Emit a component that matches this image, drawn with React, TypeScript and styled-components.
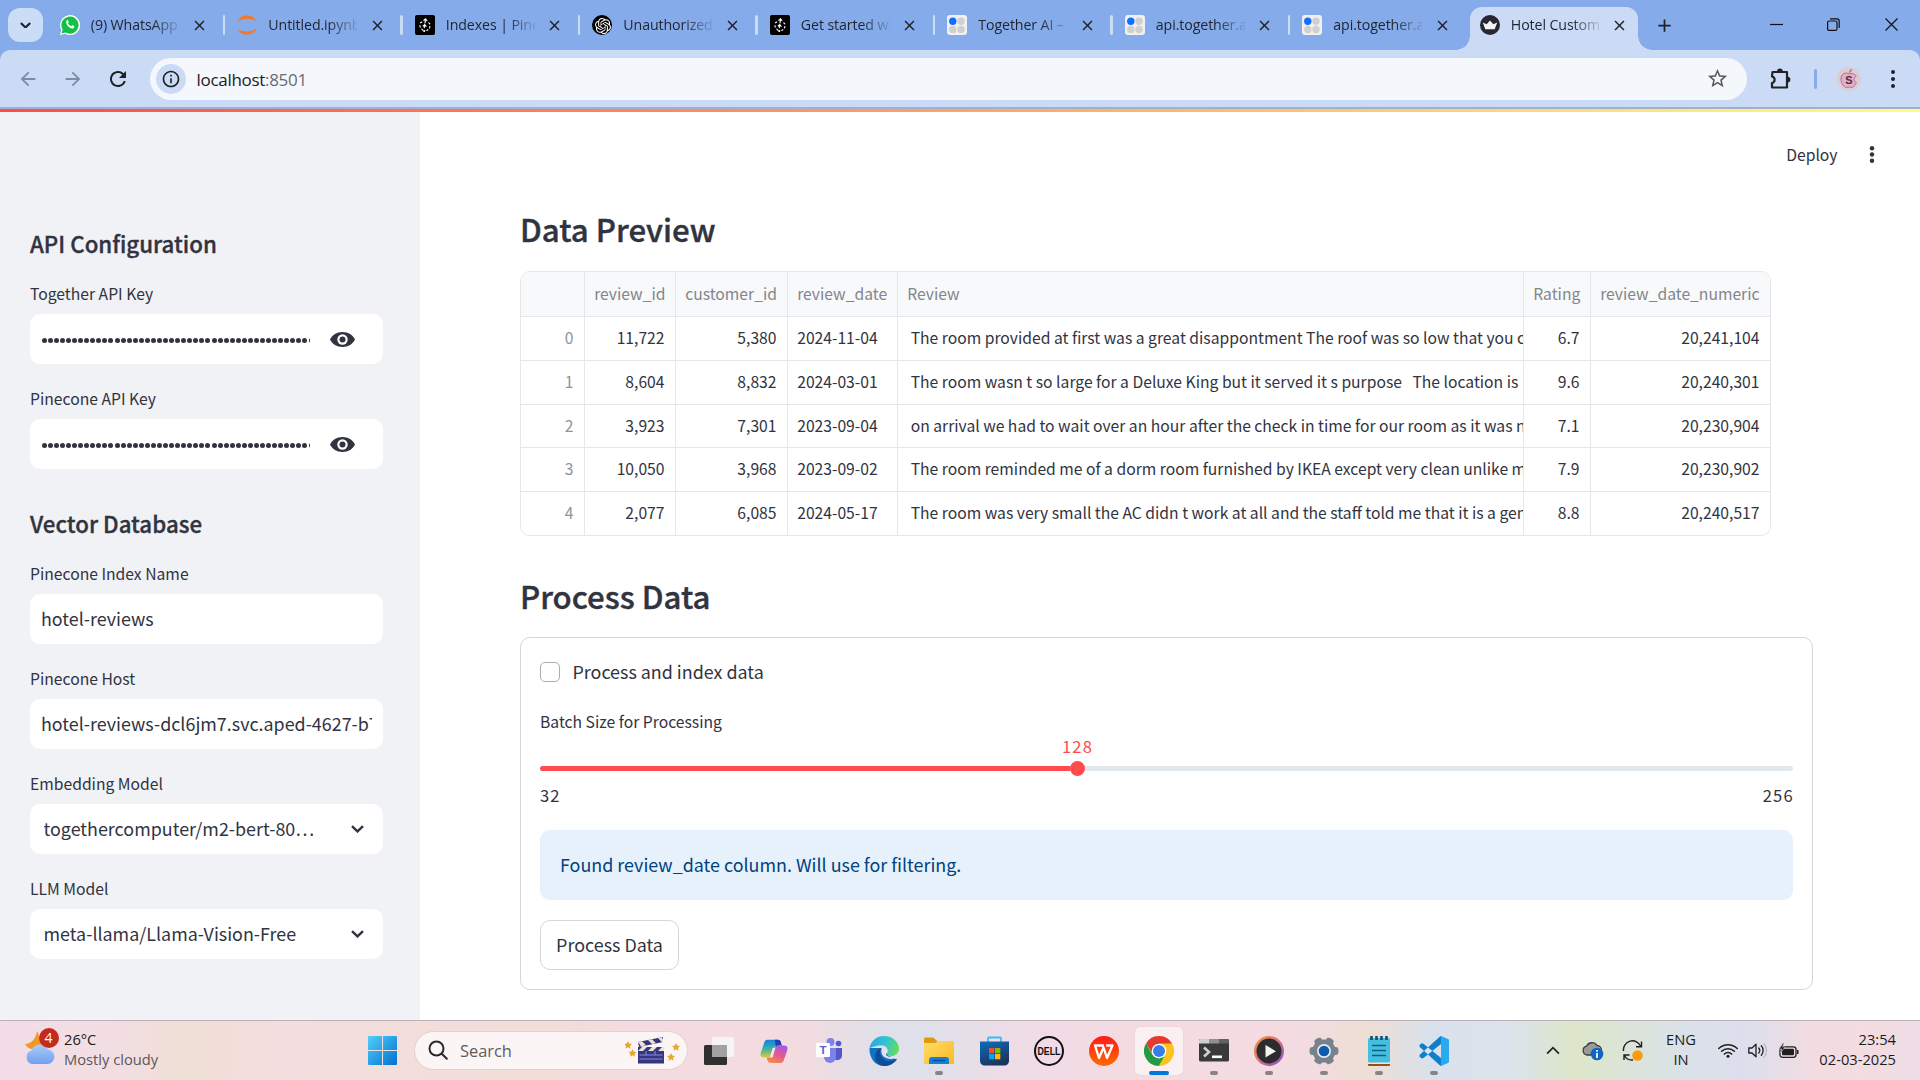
import React from "react";
import styled, { createGlobalStyle, css } from "styled-components";
import { SiOpenai } from "react-icons/si";
import {
  MdArrowBack,
  MdArrowForward,
  MdRefresh,
  MdInfoOutline,
  MdStarBorder,
  MdClose,
  MdAdd,
} from "react-icons/md";

const sans = `"Noto Sans CJK SC", "Noto Sans", sans-serif`;
const ui = `"Open Sans", "Noto Sans", sans-serif`;
const ink = "#31333f";

const GlobalStyle = createGlobalStyle`
  * { box-sizing: border-box; }
  body { margin: 0; background: #fff; overflow: hidden; }
  svg { display: block; flex: none; }
`;

const Screen = styled.div`
  width: 1920px;
  height: 1080px;
  display: flex;
  flex-direction: column;
  overflow: hidden;
  font-family: ${sans};
  color: ${ink};
`;

/* ---------- Browser chrome ---------- */

const TabStrip = styled.div`
  height: 50px;
  flex: none;
  display: flex;
  background: #85abea;
  font-family: ${ui};
`;

const TabSearch = styled.div`
  width: 35px;
  height: 34px;
  margin: 8px 3.5px 0 8px;
  border-radius: 12px;
  background: #cbdcf7;
  display: flex;
  align-items: center;
  justify-content: center;
`;

const Tab = styled.div<{ $active?: boolean; $divider?: boolean }>`
  position: relative;
  width: 177.5px;
  flex: none;
  height: 50px;
  padding-left: 13.3px;
  display: flex;
  align-items: center;
  z-index: 0;
  ${(p) =>
    p.$divider &&
    css`
      &::after {
        content: "";
        position: absolute;
        right: -1px;
        top: 15px;
        width: 2.5px;
        height: 20px;
        border-radius: 2px;
        background: #cbdcf7;
      }
    `}
  ${(p) =>
    p.$active &&
    css`
      &::before {
        content: "";
        position: absolute;
        z-index: -1;
        left: 3.5px;
        right: 6px;
        top: 7px;
        bottom: 0;
        border-radius: 12px 12px 0 0;
        background: #cbdbf6;
      }
      &::after {
        content: "";
        position: absolute;
        z-index: -1;
        left: -10.5px;
        right: -8px;
        bottom: 0;
        height: 14px;
        background: radial-gradient(circle at 0 0, transparent 13.5px, #cbdbf6 14px) left / 14px 14px no-repeat,
          radial-gradient(circle at 100% 0, transparent 13.5px, #cbdbf6 14px) right / 14px 14px no-repeat;
      }
    `}
`;

const Favicon = styled.span`
  width: 20px;
  height: 20px;
  margin-right: 11px;
  flex: none;
`;

const TabTitle = styled.span`
  width: 89px;
  margin-right: 11px;
  overflow: hidden;
  white-space: nowrap;
  font-size: 14.2px;
  letter-spacing: -0.1px;
  line-height: 22px;
  color: #1f2430;
  mask-image: linear-gradient(90deg, #000 68%, transparent 104%);
`;

const IconBox = styled.span<{ $w?: number; $color?: string }>`
  width: ${(p) => p.$w ?? 20}px;
  flex: none;
  display: flex;
  align-items: center;
  justify-content: center;
  color: ${(p) => p.$color ?? "#1f2024"};
`;

const NewTab = styled.div`
  width: 40px;
  display: flex;
  align-items: center;
  justify-content: center;
`;

const WindowButtons = styled.div`
  margin-left: auto;
  display: flex;
  height: 48px;
  align-items: center;
`;

const ToolbarBack = styled.div`
  height: 59px;
  flex: none;
  background: #85abea;
`;

const Toolbar = styled.div`
  height: 59px;
  border-radius: 10px 10px 0 0;
  border-bottom: 2px solid #a0b1cf;
  background: #cbdbf6;
  display: flex;
  align-items: center;
  padding-left: 5px;
  font-family: ${ui};
`;

const Omnibox = styled.div`
  width: 1597px;
  height: 42px;
  margin-left: 10px;
  padding: 0 18px 0 6px;
  border-radius: 21px;
  background: #f4f7fc;
  display: flex;
  align-items: center;
`;

const InfoBadge = styled.span`
  width: 30px;
  height: 30px;
  border-radius: 50%;
  background: #cbdbf6;
  display: flex;
  align-items: center;
  justify-content: center;
  color: #202227;
`;

const Url = styled.span`
  flex: 1;
  margin-left: 10.5px;
  padding-top: 1px;
  font-size: 17px;
  letter-spacing: -0.3px;
  color: #1d2025;
`;

const Muted = styled.span`
  color: #686c74;
`;

const ToolbarDivider = styled.span`
  width: 2.5px;
  height: 20px;
  border-radius: 2px;
  background: #85abea;
`;

/* ---------- Streamlit app ---------- */

const Decoration = styled.div`
  height: 3px;
  flex: none;
  background: linear-gradient(90deg, #ff4b4b, #fffd80);
`;

const AppBody = styled.div`
  flex: 1;
  min-height: 0;
  display: flex;
`;

const Sidebar = styled.aside`
  width: 420px;
  flex: none;
  padding: 113px 37px 0 30px;
  background: #f0f2f6;
`;

const SideSection = styled.section`
  margin-bottom: 36px;
`;

const SideHeading = styled.h3`
  margin: 0;
  height: 40px;
  line-height: 36px;
  font-size: 22.3px;
  font-weight: 500;
  -webkit-text-stroke: 0.35px ${ink};
  white-space: nowrap;
`;

const Field = styled.div`
  height: 105px;
  padding-top: 18px;
  &:last-child {
    height: 99px;
  }
`;

const Label = styled.div`
  height: 22px;
  line-height: 22px;
  margin-bottom: 9px;
  font-size: 15.7px;
  white-space: nowrap;
`;

const Control = styled.div<{ $select?: boolean }>`
  width: 353px;
  height: 50px;
  border-radius: 10px;
  background: #fff;
  display: flex;
  align-items: center;
  padding: 0 ${(p) => (p.$select ? 17 : 11)}px 0 ${(p) => (p.$select ? 13.5 : 11)}px;
`;

const Value = styled.div`
  flex: 1;
  overflow: hidden;
  white-space: nowrap;
  font-size: 17.9px;
  line-height: 30px;
  padding-bottom: 2px;
`;

const Secret = styled.div`
  width: 269px;
  overflow: hidden;
  white-space: nowrap;
  display: flex;
  gap: 1.07px;
  padding: 3px 0 0 0.8px;
`;

const SecretDot = styled.i`
  width: 5px;
  height: 5px;
  flex: none;
  border-radius: 50%;
  background: ${ink};
`;

const EyeBox = styled.div`
  margin-left: 20px;
`;

const Main = styled.main`
  flex: 1;
  padding: 0 107px 0 100px;
`;

const TopBar = styled.div`
  height: 96px;
  margin-right: -107px;
  padding: 0 40px 12px 0;
  display: flex;
  align-items: center;
  justify-content: flex-end;
  gap: 26.5px;
  font-size: 15.7px;
`;

const Heading = styled.h2`
  margin: 0;
  height: 44px;
  line-height: 41px;
  font-size: 31.2px;
  font-weight: 500;
  -webkit-text-stroke: 0.4px ${ink};
  white-space: nowrap;
`;

const Table = styled.div`
  width: 1251px;
  height: 265px;
  margin: 19px 0 39px;
  border: 1px solid #e6e7ea;
  border-radius: 10px;
  overflow: hidden;
  font-size: 15.68px;
`;

const Row = styled.div<{ $head?: boolean }>`
  display: grid;
  grid-template-columns: 64px 91px 112px 110px 626px 67px 179px;
  height: ${(p) => (p.$head ? 45 : 43.8)}px;
  line-height: ${(p) => (p.$head ? 43 : 41.4)}px;
  background: ${(p) => (p.$head ? "#f8f9fb" : "#fff")};
  color: ${(p) => (p.$head ? "#83858c" : ink)};
  border-bottom: 1px solid #e6e7ea;
  &:last-child {
    border-bottom: 0;
  }
`;

const Cell = styled.div<{ $right?: boolean; $faint?: boolean }>`
  padding: 0 ${(p) => (p.$right ? 10.5 : 0)}px 0 ${(p) => (p.$right ? 0 : 9.2)}px;
  border-right: 1px solid #e6e7ea;
  overflow: hidden;
  white-space: pre;
  text-align: ${(p) => (p.$right ? "right" : "left")};
  ${(p) => p.$faint && "color: #91939a;"}
  &:last-child {
    border-right: 0;
  }
`;

const Card = styled.div`
  width: 1293px;
  height: 353px;
  margin-top: 18px;
  padding: 19px;
  border: 1px solid #d6d6d9;
  border-radius: 10px;
`;

const CheckRow = styled.div`
  display: flex;
  align-items: center;
  height: 30px;
  gap: 12.5px;
  font-size: 17.9px;
`;

const CheckBox = styled.span`
  width: 20px;
  height: 20px;
  border: 1px solid #acadb2;
  border-radius: 5px;
`;

const CheckText = styled.span`
  line-height: 28px;
  padding-bottom: 2px;
`;

const SliderLabel = styled.div`
  height: 22px;
  line-height: 22px;
  margin-top: 24px;
  font-size: 15.7px;
`;

const Digits = styled.span`
  font-size: 16.6px;
  letter-spacing: 1.15px;
  line-height: 18px;
`;

const SliderValue = styled.div`
  width: 1075px;
  height: 20px;
  margin-top: 4px;
  display: flex;
  justify-content: center;
  color: #ff4b4b;
`;

const Track = styled.div`
  height: 5px;
  margin-top: 9px;
  border-radius: 3px;
  background: #e2e7ee;
  display: flex;
  align-items: center;
`;

const Fill = styled.div`
  width: 529.5px;
  height: 5px;
  border-radius: 3px 0 0 3px;
  background: #ff4b4b;
`;

const Thumb = styled.div`
  width: 15px;
  height: 15px;
  border-radius: 50%;
  background: #ff4b4b;
`;

const Range = styled.div`
  height: 20px;
  margin-top: 15px;
  display: flex;
  justify-content: space-between;
  & > :last-child {
    margin-right: -0.8px;
  }
`;

const Alert = styled.div`
  height: 70px;
  margin-top: 24px;
  padding-left: 20px;
  border-radius: 10px;
  background: #e7f1fb;
  color: #004280;
  font-size: 17.9px;
  line-height: 69px;
`;

const ProcessButton = styled.button`
  display: block;
  width: 139px;
  height: 50px;
  margin-top: 20px;
  padding: 0 0 2px;
  border: 1px solid #d6d6d9;
  border-radius: 10px;
  background: #fff;
  color: ${ink};
  font-family: ${sans};
  font-size: 17.9px;
`;

/* ---------- Taskbar ---------- */

const Taskbar = styled.footer`
  height: 60px;
  flex: none;
  border-top: 1px solid #bbb0b5;
  display: flex;
  align-items: center;
  font-family: ${ui};
  color: #1c1c1c;
  background: linear-gradient(
    90deg,
    #f2dde8 0,
    #f2dee2 120px,
    #f0dfd6 190px,
    #f4dee0 290px,
    #f2dedb 380px,
    #f2ddd9 560px,
    #f4dbe0 640px,
    #f3dce0 800px,
    #e0e0e9 880px,
    #dfe1ea 930px,
    #eedce7 1010px,
    #f3dbe2 1110px,
    #f3dce1 1300px,
    #eeded5 1370px,
    #d9e1ec 1430px,
    #dbe3ec 1510px,
    #dde6c9 1575px,
    #dce4d6 1620px,
    #dae2e9 1680px,
    #dddfec 1750px,
    #f2dce2 1810px,
    #f4dce0 1860px,
    #eedde6 1920px
  );
`;

const Weather = styled.div`
  width: 343px;
  height: 58px;
  margin-left: 24.5px;
  display: flex;
  align-items: center;
  gap: 9.5px;
`;

const WeatherIcon = styled.div`
  position: relative;
  width: 30px;
  height: 58px;
`;

const Badge = styled.span`
  position: absolute;
  left: 14px;
  top: 6px;
  width: 20px;
  height: 20px;
  border-radius: 50%;
  background: #c42b1c;
  color: #fff;
  font-size: 14px;
  line-height: 20px;
  text-align: center;
`;

const Lines = styled.div<{ $align?: string; $w?: number }>`
  display: flex;
  flex-direction: column;
  text-align: ${(p) => p.$align ?? "left"};
  ${(p) => p.$w && `width: ${p.$w}px;`}
  font-size: 14.7px;
  line-height: 20px;
  padding-bottom: 3px;
  white-space: nowrap;
`;

const Soft = styled.span`
  color: #5c5759;
`;

const SearchPill = styled.div`
  width: 274px;
  height: 39px;
  margin-left: 17.5px;
  padding: 0 6px 1px 12.5px;
  border-radius: 20px;
  border: 1px solid #e2d0d2;
  background: #fbf5f6;
  display: flex;
  align-items: center;
  font-size: 16.4px;
  color: #5f5b5c;
`;

const SearchText = styled.span`
  flex: 1;
  margin-left: 12.5px;
`;

const Apps = styled.div`
  display: flex;
  margin-left: 7px;
`;

const AppSlot = styled.div<{ $active?: boolean; $open?: boolean }>`
  position: relative;
  width: 48px;
  height: 48px;
  margin-right: 7px;
  border-radius: 5px;
  display: flex;
  align-items: center;
  justify-content: center;
  ${(p) =>
    p.$active &&
    css`
      background: #faeff1;
      box-shadow: 0 0 1px #c9b8bb;
    `}
  &::after {
    content: "";
    display: ${(p) => (p.$open ? "block" : "none")};
    position: absolute;
    bottom: 0;
    left: ${(p) => (p.$active ? 14 : 20)}px;
    width: ${(p) => (p.$active ? 20 : 8)}px;
    height: 4px;
    border-radius: 2px;
    background: ${(p) => (p.$active ? "#0078d4" : "#8a8284")};
  }
`;

const Tray = styled.div`
  margin-left: auto;
  margin-right: 24px;
  display: flex;
  align-items: center;
`;

/* ---------- Icons ---------- */

const PineconeIcon = () => (
  <svg width="20" height="20" viewBox="0 0 20 20">
    <rect width="20" height="20" rx="2" fill="#000" />
    <g stroke="#fff" strokeWidth="1.1" fill="none" strokeLinecap="round">
      <path d="M10.600 4 10 8M8.800 5.200l1.800-1.400 1.300 1.900M9.700 9.800l-.4 3M8.200 11l1.600-1.500 1.300 1.900" />
      <path d="M6.800 7 5.500 7.800M13.800 7.800l1 1.100M5 10.500l.2 1.600M14.900 11.500l-.4 1.400M6.800 14.200l1 1M12.900 14.800l-1.100.7" />
    </g>
    <circle cx="9.200" cy="16" r="1.100" fill="#fff" />
  </svg>
);

const OpenAiIcon = () => (
  <svg width="20" height="20" viewBox="0 0 20 20">
    <circle cx="10" cy="10" r="10" fill="#000" />
    <SiOpenai x="3" y="3" width="14" height="14" color="#fff" />
  </svg>
);

const TogetherIcon = () => (
  <svg width="20" height="20" viewBox="0 0 20 20">
    <rect width="20" height="20" rx="3" fill="#f2f0ee" />
    <circle cx="5.800" cy="6.200" r="3.700" fill="#0f6fff" />
    <circle cx="14" cy="6.200" r="3.700" fill="#d0cfd1" />
    <circle cx="5.800" cy="14.400" r="3.700" fill="#d0cfd1" />
    <circle cx="14" cy="14.400" r="3.700" fill="#d0cfd1" />
  </svg>
);

const WhatsappIcon = () => (
  <svg width="20" height="20" viewBox="0 0 20 20">
    <path d="M0 20 1.4 15A10 10 0 1 1 5 18.7z" fill="#fff" />
    <path d="M1.5 18.5 2.7 14.7A8.6 8.6 0 1 1 5.6 17.5z" fill="#10c143" />
    <path
      d="M6.9 5.3c.4-.4 1-.3 1.200.2l.6 1.500c.1.4-.5 1-.7 1.300.6 1.300 1.700 2.300 3.200 2.900.3-.2.9-1.100 1.300-.9l1.500.8c.5.3.4 1.200-.2 1.800-2.700 2.400-9.700-3.500-6.900-7.600z"
      fill="#fff"
    />
  </svg>
);

const JupyterIcon = () => (
  <svg width="20" height="20" viewBox="0 0 20 20" fill="#f5782a">
    <path d="M.6 6.300C3-1.500 17-1.500 19.400 6.300 15 2.800 5 2.800.6 6.300z" />
    <path d="M.6 13.700c2.400 7.800 16.400 7.800 18.800 0-4.400 3.500-14.400 3.500-18.800 0z" />
  </svg>
);

const CrownIcon = () => (
  <svg width="20" height="20" viewBox="0 0 20 20">
    <circle cx="10" cy="10" r="10" fill="#262730" />
    <path d="M2.800 7.500 6.700 9.300 10 5.500l3.300 3.800 3.900-1.800-2.500 6.800H5.300z" fill="#f4f4f4" />
  </svg>
);

const Dots = ({ r, h, color }: { r: number; h: number; color: string }) => (
  <svg width="6" height={h} viewBox={`0 0 6 ${h}`} fill={color}>
    <circle cx="3" cy={r} r={r} />
    <circle cx="3" cy={h / 2} r={r} />
    <circle cx="3" cy={h - r} r={r} />
  </svg>
);

const Chevron = ({ w = 13, stroke = 2.4, up = false, color = ink }) => (
  <svg width={w} height={w * 0.62} viewBox="0 0 13 8" fill="none" stroke={color} strokeWidth={stroke}>
    <path d={up ? "M1 7 6.500 1.500 12 7" : "M1 1.200 6.500 6.400 12 1.200"} />
  </svg>
);

const EyeIcon = () => (
  <svg width="25" height="15" viewBox="0 0 25 15">
    <path d="M12.500 0C6.800 0 2 3.100 0 7.500 2 11.900 6.800 15 12.500 15S23 11.900 25 7.500C23 3.100 18.200 0 12.500 0z" fill={ink} />
    <circle cx="12.500" cy="7.500" r="5.200" fill="#fff" />
    <circle cx="12.500" cy="7.500" r="3" fill={ink} />
  </svg>
);

const PuzzleIcon = () => (
  <svg width="24" height="24" viewBox="0 0 24 24" fill="#202227">
    <path
      d="M3.500 5h14.500v15.500h-15v-4.500c3.500-.8 3.500-5.700 0-6.500z"
      fill="none"
      stroke="#202227"
      strokeWidth="2.200"
      strokeLinejoin="round"
    />
    <path d="M8 4.500a2.900 2.900 0 0 1 5.800 0zM18.500 9.700a2.900 2.900 0 0 1 0 5.800z" />
  </svg>
);

const AvatarIcon = () => (
  <svg width="24" height="24" viewBox="0 0 24 24">
    <circle cx="12" cy="12" r="12" fill="#d9cfd3" />
    <path
      d="M12 7c-3-2-8-.8-8 5 0 4.500 3 8.500 5.500 8.500 1 0 1.500-.5 2.500-.5s1.500.5 2.500.5c2 0 4-2.500 4.800-5-2.800-1.200-2.900-5 0-6.300C17.500 6.500 14.500 6 12 7z"
      fill="#dcb3c9"
      stroke="#cf5f9f"
      strokeWidth="1"
    />
    <path d="M12 6c0-2.500 1-3.700 3-4.200 0 2.500-1.200 3.800-3 4.200z" fill="#c9729f" />
    <text x="12" y="17" textAnchor="middle" fontFamily="Liberation Sans, sans-serif" fontWeight="700" fontSize="11" fill="#5b2740">
      S
    </text>
  </svg>
);

const CloudIcon = () => (
  <svg width="32" height="58" viewBox="0 0 32 58">
    <path d="M12 9c3 5 2 10 7 14l-8 4H6c-3-1-5-3-6-5 6 0 11-5 12-13z" fill="#f09a24" />
    <defs>
      <linearGradient id="cloud" x1="0" y1="0" x2="0" y2="1">
        <stop offset="0" stopColor="#a9cbfa" />
        <stop offset="1" stopColor="#6fa0ee" />
      </linearGradient>
    </defs>
    <path d="M7 42a7 7 0 0 1-.5-13.500A9 9 0 0 1 23 27.500 7.300 7.300 0 0 1 23 42z" fill="url(#cloud)" />
  </svg>
);

const StartIcon = () => (
  <svg width="29" height="29" viewBox="0 0 29 29">
    <defs>
      <linearGradient id="win" x1="0" y1="0" x2="1" y2="1">
        <stop offset="0" stopColor="#52d0fb" />
        <stop offset="1" stopColor="#0070d0" />
      </linearGradient>
    </defs>
    <path d="M1 0h13v14H0V1a1 1 0 0 1 1-1zM15 0h13a1 1 0 0 1 1 1v13H15zM0 15h14v14H1a1 1 0 0 1-1-1zM15 15h14v13a1 1 0 0 1-1 1H15z" fill="url(#win)" />
  </svg>
);

const SearchIcon = () => (
  <svg width="20" height="20" viewBox="0 0 20 20" fill="none" stroke="#2b2b2b" strokeWidth="2" strokeLinecap="round">
    <circle cx="8.500" cy="8.500" r="7" />
    <path d="m13.800 13.800 5 5" />
  </svg>
);

const star = "l1.200 2.600 2.800.3-2 2 .6 2.900-2.600-1.500-2.600 1.500.6-2.900-2-2 2.800-.3z";
const ClapperIcon = () => (
  <svg width="56" height="28" viewBox="0 0 56 28">
    <path d={`M3 5${star}M7.500 13${star}M51 7${star}M46 17${star}`} fill="#e6a92e" />
    <path d="M13 6 38 1v5L14 11z" fill="#38357d" />
    <path d="m13 6 4-.8 4 4-5 1zM23 4l4-.8 4 4-4 .8zM33 2l4-.8 1 2.500V6l-1 .3z" fill="#ece4dc" />
    <path d="M13 11h26v16.500H13z" fill="#36357f" />
    <path d="m13 15 4-4h5l-4 4zM23 15l4-4h5l-4 4zM33 15l4-4h2v4z" fill="#ece4dc" />
    <path d="M14.500 19h23M14.500 23h23M21 15v4M30 15v4" stroke="#8490d8" strokeWidth="1" />
  </svg>
);

const TaskViewIcon = () => (
  <svg width="30" height="30" viewBox="0 0 30 30">
    <rect x="0" y="9" width="23" height="20" rx="1.500" fill="#2f302f" />
    <rect x="8" y="1" width="22" height="20" rx="1.500" fill="#f5f5f5" />
    <path d="M8 9h15v12H9.500A1.500 1.500 0 0 1 8 19.500z" fill="#a2a2a2" />
  </svg>
);

const CopilotIcon = () => (
  <svg width="28" height="26" viewBox="0 0 30 28">
    <defs>
      <linearGradient id="cpa" x1="0" y1="0" x2="0" y2="1">
        <stop offset="0" stopColor="#1a7fe0" />
        <stop offset=".5" stopColor="#35b3a8" />
        <stop offset="1" stopColor="#e8c92c" />
      </linearGradient>
      <linearGradient id="cpb" x1=".7" y1="0" x2=".3" y2="1">
        <stop offset="0" stopColor="#a457e8" />
        <stop offset=".5" stopColor="#e4588f" />
        <stop offset="1" stopColor="#f78b4a" />
      </linearGradient>
    </defs>
    <path d="M8 2h11c2 0 3 1 3.500 3l.8 3h-4c-2 0-3 1-3.500 3l-2 7c-.5 2-1.500 3-3.500 3H4c-4 0-4-3-3-6L4.500 5C5.200 3 6 2 8 2z" fill="url(#cpa)" />
    <path d="M16 2h3c2 0 3 1 3.500 3l.8 3h-4l-2.500 1z" fill="#1c3fb5" />
    <path d="M22 27H11.500c-2 0-3-1-3.500-3l-.8-3h3.300c2 0 3-1 3.500-3l2-7c.5-2 1.500-3 3.500-3H26c4 0 4 3 3 6l-3.500 10c-.7 2-1.500 3-3.500 3z" fill="url(#cpb)" />
    <path d="M16.500 10.500 13.500 21h-3l3.200-10.500z" fill="#f4e3ea" />
  </svg>
);

const TeamsIcon = () => (
  <svg width="28" height="26" viewBox="0 0 28 26">
    <circle cx="15.500" cy="4" r="4" fill="#7b83eb" />
    <circle cx="23.500" cy="5.500" r="2.800" fill="#5059c9" />
    <path d="M18 10h9v8a5 5 0 0 1-9 2z" fill="#5059c9" />
    <path d="M9 10h12v9a6 6 0 0 1-12 0z" fill="#7b83eb" />
    <rect x="1" y="5" width="14" height="14" rx="1" fill="#fff" />
    <text x="8" y="16" textAnchor="middle" fontFamily="Liberation Sans, sans-serif" fontWeight="700" fontSize="11.500" fill="#5b62c8">
      T
    </text>
  </svg>
);

const EdgeIcon = () => (
  <svg width="30" height="30" viewBox="0 0 30 30">
    <defs>
      <linearGradient id="eda" x1="0" y1=".3" x2="1" y2=".5">
        <stop offset="0" stopColor="#2aa5e3" />
        <stop offset=".5" stopColor="#2fc3d4" />
        <stop offset="1" stopColor="#62dc60" />
      </linearGradient>
    </defs>
    <path d="M.5 12C0 22 6 30 15 30c5.500 0 10-2.500 13-6.500L20 20l-8-8z" fill="#1273c4" />
    <path d="M.5 12C2 4.500 8 0 15 0c9 0 15 6.500 15 12.500 0 5-4 7.500-7.500 7.500-3 0-5-1-4.500-2.500 2-3 0-7.500-4.500-8C8 9 2 11.500.5 12z" fill="url(#eda)" />
    <path d="M12 12c-3 6 1 13 8 13 3.500 0 6.500-1 8-2.500C25 27.500 20.500 30 15 30 8 29 5 23 6.500 18c1-3.500 3-5.500 5.500-6z" fill="#0f4c96" />
    <path d="M12.500 13.500c.5-1.500 2.500-2 4-.8 1.500 1.300 1.500 3.300.5 5-.5 1.500 2 3.300 6 3.300 2 0 3.500-.4 4.800-1l.2 1.500c-2 1.200-5 1.800-8 1.300-6-1-8.500-5-7.500-9.300z" fill="#e6e1ea" />
  </svg>
);

const FolderIcon = () => (
  <svg width="30" height="27" viewBox="0 0 30 27">
    <path d="M0 2a1.500 1.500 0 0 1 1.500-1.500h8L13 4h15a2 2 0 0 1 2 2v4H0z" fill="#dd9a0e" />
    <defs>
      <linearGradient id="fld" x1="0" y1="0" x2="1" y2="1">
        <stop offset="0" stopColor="#ffdc6b" />
        <stop offset="1" stopColor="#fbb81f" />
      </linearGradient>
    </defs>
    <path d="M0 6h11l3-2h15a1 1 0 0 1 1 1v22H0z" fill="url(#fld)" />
    <path d="M5 27v-4a3 3 0 0 1 3-3h14a3 3 0 0 1 3 3v4z" fill="#1180d6" />
    <path d="M8.500 23.500h13" stroke="#0a4f96" strokeWidth="1.400" />
  </svg>
);

const StoreIcon = () => (
  <svg width="29" height="30" viewBox="0 0 29 30">
    <defs>
      <linearGradient id="sto" x1="0" y1="0" x2=".4" y2="1">
        <stop offset="0" stopColor="#0f6cbd" />
        <stop offset="1" stopColor="#1c355e" />
      </linearGradient>
    </defs>
    <path d="M8 6V2.500A1 1 0 0 1 9 1.500h11a1 1 0 0 1 1 1V6" fill="none" stroke="#38bdf5" strokeWidth="1.800" />
    <path d="M0 5.500h29V25a4.500 4.500 0 0 1-4.500 4.500h-20A4.500 4.500 0 0 1 0 25z" fill="url(#sto)" />
    <path d="M9 12h5.300v5.300H9z" fill="#f25022" />
    <path d="M15 12h5.300v5.300H15z" fill="#7fba00" />
    <path d="M9 18h5.300v5.300H9z" fill="#00a4ef" />
    <path d="M15 18h5.300v5.300H15z" fill="#ffb900" />
  </svg>
);

const DellIcon = () => (
  <svg width="30" height="30" viewBox="0 0 30 30">
    <circle cx="15" cy="15" r="14" fill="none" stroke="#111" strokeWidth="2" />
    <text x="15" y="18.800" textAnchor="middle" textLength="23" lengthAdjust="spacingAndGlyphs" fontFamily="Liberation Sans, sans-serif" fontWeight="700" fontSize="10.500" fill="#111">
      DELL
    </text>
  </svg>
);

const WpsIcon = () => (
  <svg width="30" height="30" viewBox="0 0 30 30">
    <defs>
      <linearGradient id="wps" x1="0" y1="0" x2="0" y2="1">
        <stop offset="0" stopColor="#ff1a1a" />
        <stop offset="1" stopColor="#ff6a00" />
      </linearGradient>
    </defs>
    <circle cx="15" cy="15" r="15" fill="url(#wps)" />
    <path d="M14 9.500H6l4 12.500 4.500-10.500L18 22l5.500-12.500H18" fill="none" stroke="#fff" strokeWidth="2.300" strokeLinejoin="round" strokeLinecap="round" />
  </svg>
);

const ChromeIcon = () => (
  <svg width="30" height="30" viewBox="0 0 30 30">
    <path d="M8.900 18.500 2 7.500A15 15 0 0 1 28 7.500L21 15z" fill="#e33b2e" />
    <path d="M2 7.500 8.500 18.750 15 22.500 21.500 18.750 15 30A15 15 0 0 1 2 7.500z" fill="#249a41" />
    <path d="M15 7.500h13A15 15 0 0 1 15 30l6.500-11.250z" fill="#fcc31e" />
    <circle cx="15" cy="15" r="7.300" fill="#fff" />
    <circle cx="15" cy="15" r="6" fill="#3a7cec" />
  </svg>
);

const TerminalIcon = () => (
  <svg width="30" height="23" viewBox="0 0 30 23">
    <rect width="30" height="22.500" rx="1.500" fill="#3a3a3a" />
    <path d="M0 4.500V1.500A1.500 1.500 0 0 1 1.500 0H10v4.500z" fill="#cfcfcf" />
    <path d="M10 0h10v4.500H10z" fill="#8f8f8f" />
    <path d="M20 0h8.500A1.500 1.500 0 0 1 30 1.500v3H20z" fill="#616161" />
    <path d="m5 8.500 5 4.500-5 4.500" fill="none" stroke="#cfcfcf" strokeWidth="2.600" />
    <path d="M13 17.800h10" stroke="#fff" strokeWidth="2.600" />
  </svg>
);

const MediaIcon = () => (
  <svg width="30" height="30" viewBox="0 0 30 30">
    <defs>
      <linearGradient id="med" x1="0" y1="0" x2="1" y2="1">
        <stop offset="0" stopColor="#f5953a" />
        <stop offset=".5" stopColor="#d8707f" />
        <stop offset="1" stopColor="#7b4ed0" />
      </linearGradient>
    </defs>
    <circle cx="15" cy="15" r="15" fill="url(#med)" />
    <circle cx="15" cy="15" r="12.500" fill="#2c2c2e" />
    <path d="M11.500 9v12.500l10.500-6.300z" fill="#f4f4f4" />
  </svg>
);

const GearIcon = () => (
  <svg width="30" height="30" viewBox="0 0 30 30">
    <g fill="#77828c">
      <circle cx="15" cy="15" r="11.500" />
      {[30, 90, 150, 210, 270, 330].map((a) => (
        <path key={a} d="M10.500 6 11.500 1.300Q15-.3 18.500 1.300L19.500 6z" transform={`rotate(${a} 15 15)`} />
      ))}
    </g>
    <circle cx="15" cy="15" r="7" fill="#e8ebee" />
    <circle cx="15" cy="15" r="5.300" fill="#0d5cab" />
  </svg>
);

const NotepadIcon = () => (
  <svg width="22" height="30" viewBox="0 0 22 30">
    <rect y="25" width="22" height="5" rx="1" fill="#9a4f12" />
    <rect y="25" width="22" height="3" fill="#f2e4d8" />
    <rect y="2" width="22" height="24.500" rx="1.500" fill="#45bfdf" />
    <path d="M4 9.500h14M4 14.500h14M4 19.500h14" stroke="#0c5f82" strokeWidth="1.700" />
    <path d="M3.500 0v4M8.500 0v4M13.500 0v4M18.500 0v4" stroke="#17506b" strokeWidth="2.600" />
  </svg>
);

const CodeIcon = () => (
  <svg width="30" height="30" viewBox="0 0 30 30">
    <path d="M22 0 29 3a1.500 1.500 0 0 1 1 1.500v21a1.500 1.500 0 0 1-1 1.500l-7 3z" fill="#29a9ee" />
    <path d="M22 0v8L4.500 22 2.500 22.500.5 20.500V19L21 .6zM2.500 7.300.5 9.300v1.500L21 29.400l1 .6v-8L4.500 7.800z" fill="#0f7fcb" />
  </svg>
);

const OneDriveIcon = () => (
  <svg width="22" height="20" viewBox="0 0 22 20">
    <path d="M5 14a4.500 4.500 0 0 1-.5-8.800A6 6 0 0 1 15 4.500c2.500 0 4.500 2 4.500 4.700S17.500 14 15 14z" fill="#9a9c9b" stroke="#3c3e3d" strokeWidth="1.300" />
    <circle cx="15" cy="13" r="6.300" fill="#0d66c2" />
    <path d="M15 9v1.700M15 12v5" stroke="#fff" strokeWidth="1.800" />
  </svg>
);

const SyncIcon = () => (
  <svg width="22" height="22" viewBox="0 0 22 22" fill="none" stroke="#1f1f1f" strokeWidth="1.400">
    <path d="M1.500 11A9 9 0 0 1 18.800 6.500M19.500 1.500v5.300h-5.500M2 20v-5h5.500M2.300 15.500A9 9 0 0 0 11 20" />
    <circle cx="15.500" cy="15.500" r="5.300" fill="#ff9a0a" stroke="none" />
  </svg>
);

const WifiIcon = () => (
  <svg width="20" height="15" viewBox="0 0 20 15" fill="none" stroke="#1f1f1f" strokeWidth="1.500" strokeLinecap="round">
    <path d="M.8 5.500a13 13 0 0 1 18.400 0M3.600 8.300a9 9 0 0 1 12.800 0M6.400 11.100a5 5 0 0 1 7.200 0" />
    <circle cx="10" cy="13.200" r="1.500" fill="#1f1f1f" stroke="none" />
  </svg>
);

const SpeakerIcon = () => (
  <svg width="20" height="17" viewBox="0 0 20 17" fill="none" stroke="#1f1f1f" strokeWidth="1.300" strokeLinejoin="round" strokeLinecap="round">
    <path d="M.8 6v5h3.200L8 14.800V2.200L4 6z" />
    <path d="M10.800 6a4 4 0 0 1 0 5M13.300 3.800a7 7 0 0 1 0 9.400" />
    <path d="M16 2a9.500 9.500 0 0 1 0 13" stroke="#b9bac0" />
  </svg>
);

const BatteryIcon = () => (
  <svg width="20" height="16" viewBox="0 0 20 16">
    <rect x="1" y="3.800" width="16" height="10.500" rx="2.500" fill="none" stroke="#1f1f1f" strokeWidth="1.300" />
    <rect x="3" y="5.800" width="12" height="6.500" rx="1" fill="#1f1f1f" />
    <path d="M18 7h1.500v4H18z" fill="#1f1f1f" />
    <path d="M4 0 .3 6h2.400L1.700 10 6 4H3.500L5 0z" fill="#1f1f1f" stroke="#dfdfea" strokeWidth=".5" />
  </svg>
);

const MinimizeIcon = () => (
  <svg width="13" height="13" viewBox="0 0 13 13" stroke="#111" strokeWidth="1.200">
    <path d="M0 6.500h13" />
  </svg>
);

const RestoreIcon = () => (
  <svg width="13" height="13" viewBox="0 0 13 13" fill="none" stroke="#111" strokeWidth="1.200">
    <rect x=".6" y="3" width="9.400" height="9.400" rx="1.500" />
    <path d="M3 .8h7a2.200 2.200 0 0 1 2.200 2.200v7" />
  </svg>
);

const CloseWindowIcon = () => (
  <svg width="13" height="13" viewBox="0 0 13 13" stroke="#111" strokeWidth="1.200">
    <path d="m.5.5 12 12M12.500.5l-12 12" />
  </svg>
);

/* ---------- Data ---------- */

const tabs = [
  { icon: <WhatsappIcon />, title: "(9) WhatsApp" },
  { icon: <JupyterIcon />, title: "Untitled.ipynb" },
  { icon: <PineconeIcon />, title: "Indexes | Pinecone" },
  { icon: <OpenAiIcon />, title: "Unauthorized" },
  { icon: <PineconeIcon />, title: "Get started with" },
  { icon: <TogetherIcon />, title: "Together AI –" },
  { icon: <TogetherIcon />, title: "api.together.ai" },
  { icon: <TogetherIcon />, title: "api.together.ai" },
  { icon: <CrownIcon />, title: "Hotel Customer" },
];

const rows = [
  ["0", "11,722", "5,380", "2024-11-04", " The room provided at first was a great disappontment The roof was so low that you could", "6.7", "20,241,104"],
  ["1", "8,604", "8,832", "2024-03-01", " The room wasn t so large for a Deluxe King but it served it s purpose   The location is", "9.6", "20,240,301"],
  ["2", "3,923", "7,301", "2023-09-04", " on arrival we had to wait over an hour after the check in time for our room as it was not", "7.1", "20,230,904"],
  ["3", "10,050", "3,968", "2023-09-02", " The room reminded me of a dorm room furnished by IKEA except very clean unlike most", "7.9", "20,230,902"],
  ["4", "2,077", "6,085", "2024-05-17", " The room was very small the AC didn t work at all and the staff told me that it is a general", "8.8", "20,240,517"],
];

const apps = [
  { icon: <TaskViewIcon /> },
  { icon: <CopilotIcon /> },
  { icon: <TeamsIcon /> },
  { icon: <EdgeIcon /> },
  { icon: <FolderIcon />, open: true },
  { icon: <StoreIcon /> },
  { icon: <DellIcon /> },
  { icon: <WpsIcon /> },
  { icon: <ChromeIcon />, open: true, active: true },
  { icon: <TerminalIcon />, open: true },
  { icon: <MediaIcon />, open: true },
  { icon: <GearIcon />, open: true },
  { icon: <NotepadIcon />, open: true },
  { icon: <CodeIcon />, open: true },
];

const SecretField = ({ label }: { label: string }) => (
  <Field>
    <Label>{label}</Label>
    <Control>
      <Secret>
        {Array.from({ length: 48 }, (_, i) => (
          <SecretDot key={i} />
        ))}
      </Secret>
      <EyeBox>
        <EyeIcon />
      </EyeBox>
    </Control>
  </Field>
);

const TextField = ({ label, value }: { label: string; value: string }) => (
  <Field>
    <Label>{label}</Label>
    <Control>
      <Value>{value}</Value>
    </Control>
  </Field>
);

const SelectField = ({ label, value }: { label: string; value: string }) => (
  <Field>
    <Label>{label}</Label>
    <Control $select>
      <Value>{value}</Value>
      <IconBox $w={18}>
        <Chevron />
      </IconBox>
    </Control>
  </Field>
);

export default function App() {
  return (
    <Screen>
      <GlobalStyle />
      <TabStrip>
        <TabSearch>
          <Chevron w={11} stroke={2.6} color="#1f2024" />
        </TabSearch>
        {tabs.map((t, i) => (
          <Tab key={i} $active={i === 8} $divider={i < 7}>
            <Favicon>{t.icon}</Favicon>
            <TabTitle>{t.title}</TabTitle>
            <IconBox $w={18}>
              <MdClose size={17} />
            </IconBox>
          </Tab>
        ))}
        <NewTab>
          <MdAdd size={21} color="#1f2024" />
        </NewTab>
        <WindowButtons>
          <IconBox $w={57}>
            <MinimizeIcon />
          </IconBox>
          <IconBox $w={57}>
            <RestoreIcon />
          </IconBox>
          <IconBox $w={58}>
            <CloseWindowIcon />
          </IconBox>
        </WindowButtons>
      </TabStrip>
      <ToolbarBack>
        <Toolbar>
          <IconBox $w={45} $color="#7f8ba3">
            <MdArrowBack size={22} />
          </IconBox>
          <IconBox $w={45} $color="#7f8ba3">
            <MdArrowForward size={22} />
          </IconBox>
          <IconBox $w={45}>
            <MdRefresh size={24} />
          </IconBox>
          <Omnibox>
            <InfoBadge>
              <MdInfoOutline size={20} />
            </InfoBadge>
            <Url>
              localhost<Muted>:8501</Muted>
            </Url>
            <MdStarBorder size={23} color="#55585e" />
          </Omnibox>
          <IconBox $w={67}>
            <PuzzleIcon />
          </IconBox>
          <ToolbarDivider />
          <IconBox $w={64}>
            <AvatarIcon />
          </IconBox>
          <IconBox $w={24}>
            <Dots r={2} h={18} color="#202227" />
          </IconBox>
        </Toolbar>
      </ToolbarBack>
      <Decoration />
      <AppBody>
        <Sidebar>
          <SideSection>
            <SideHeading>API Configuration</SideHeading>
            <SecretField label="Together API Key" />
            <SecretField label="Pinecone API Key" />
          </SideSection>
          <SideSection>
            <SideHeading>Vector Database</SideHeading>
            <TextField label="Pinecone Index Name" value="hotel-reviews" />
            <TextField label="Pinecone Host" value="hotel-reviews-dcl6jm7.svc.aped-4627-b74a.pinecone.io" />
            <SelectField label="Embedding Model" value="togethercomputer/m2-bert-80…" />
            <SelectField label="LLM Model" value="meta-llama/Llama-Vision-Free" />
          </SideSection>
        </Sidebar>
        <Main>
          <TopBar>
            Deploy
            <IconBox $w={16}>
              <Dots r={2.2} h={17} color={ink} />
            </IconBox>
          </TopBar>
          <Heading>Data Preview</Heading>
          <Table>
            <Row $head>
              <Cell />
              <Cell>review_id</Cell>
              <Cell>customer_id</Cell>
              <Cell>review_date</Cell>
              <Cell>Review</Cell>
              <Cell>Rating</Cell>
              <Cell>review_date_numeric</Cell>
            </Row>
            {rows.map((r) => (
              <Row key={r[0]}>
                <Cell $right $faint>{r[0]}</Cell>
                <Cell $right>{r[1]}</Cell>
                <Cell $right>{r[2]}</Cell>
                <Cell>{r[3]}</Cell>
                <Cell>{r[4]}</Cell>
                <Cell $right>{r[5]}</Cell>
                <Cell $right>{r[6]}</Cell>
              </Row>
            ))}
          </Table>
          <Heading>Process Data</Heading>
          <Card>
            <CheckRow>
              <CheckBox />
              <CheckText>Process and index data</CheckText>
            </CheckRow>
            <SliderLabel>Batch Size for Processing</SliderLabel>
            <SliderValue>
              <Digits>128</Digits>
            </SliderValue>
            <Track>
              <Fill />
              <Thumb />
            </Track>
            <Range>
              <Digits>32</Digits>
              <Digits>256</Digits>
            </Range>
            <Alert>Found review_date column. Will use for filtering.</Alert>
            <ProcessButton>Process Data</ProcessButton>
          </Card>
        </Main>
      </AppBody>
      <Taskbar>
        <Weather>
          <WeatherIcon>
            <CloudIcon />
            <Badge>4</Badge>
          </WeatherIcon>
          <Lines>
            <span>26°C</span>
            <Soft>Mostly cloudy</Soft>
          </Lines>
        </Weather>
        <StartIcon />
        <SearchPill>
          <SearchIcon />
          <SearchText>Search</SearchText>
          <ClapperIcon />
        </SearchPill>
        <Apps>
          {apps.map((a, i) => (
            <AppSlot key={i} $open={a.open} $active={a.active}>
              {a.icon}
            </AppSlot>
          ))}
        </Apps>
        <Tray>
          <IconBox $w={40}>
            <Chevron w={14} stroke={1.6} up color="#1f1f1f" />
          </IconBox>
          <IconBox $w={40}>
            <OneDriveIcon />
          </IconBox>
          <IconBox $w={40}>
            <SyncIcon />
          </IconBox>
          <Lines $align="center" $w={56}>
            <span>ENG</span>
            <span>IN</span>
          </Lines>
          <IconBox $w={38}>
            <WifiIcon />
          </IconBox>
          <IconBox $w={22}>
            <SpeakerIcon />
          </IconBox>
          <IconBox $w={40}>
            <BatteryIcon />
          </IconBox>
          <Lines $align="right" $w={87}>
            <span>23:54</span>
            <span>02-03-2025</span>
          </Lines>
        </Tray>
      </Taskbar>
    </Screen>
  );
}
